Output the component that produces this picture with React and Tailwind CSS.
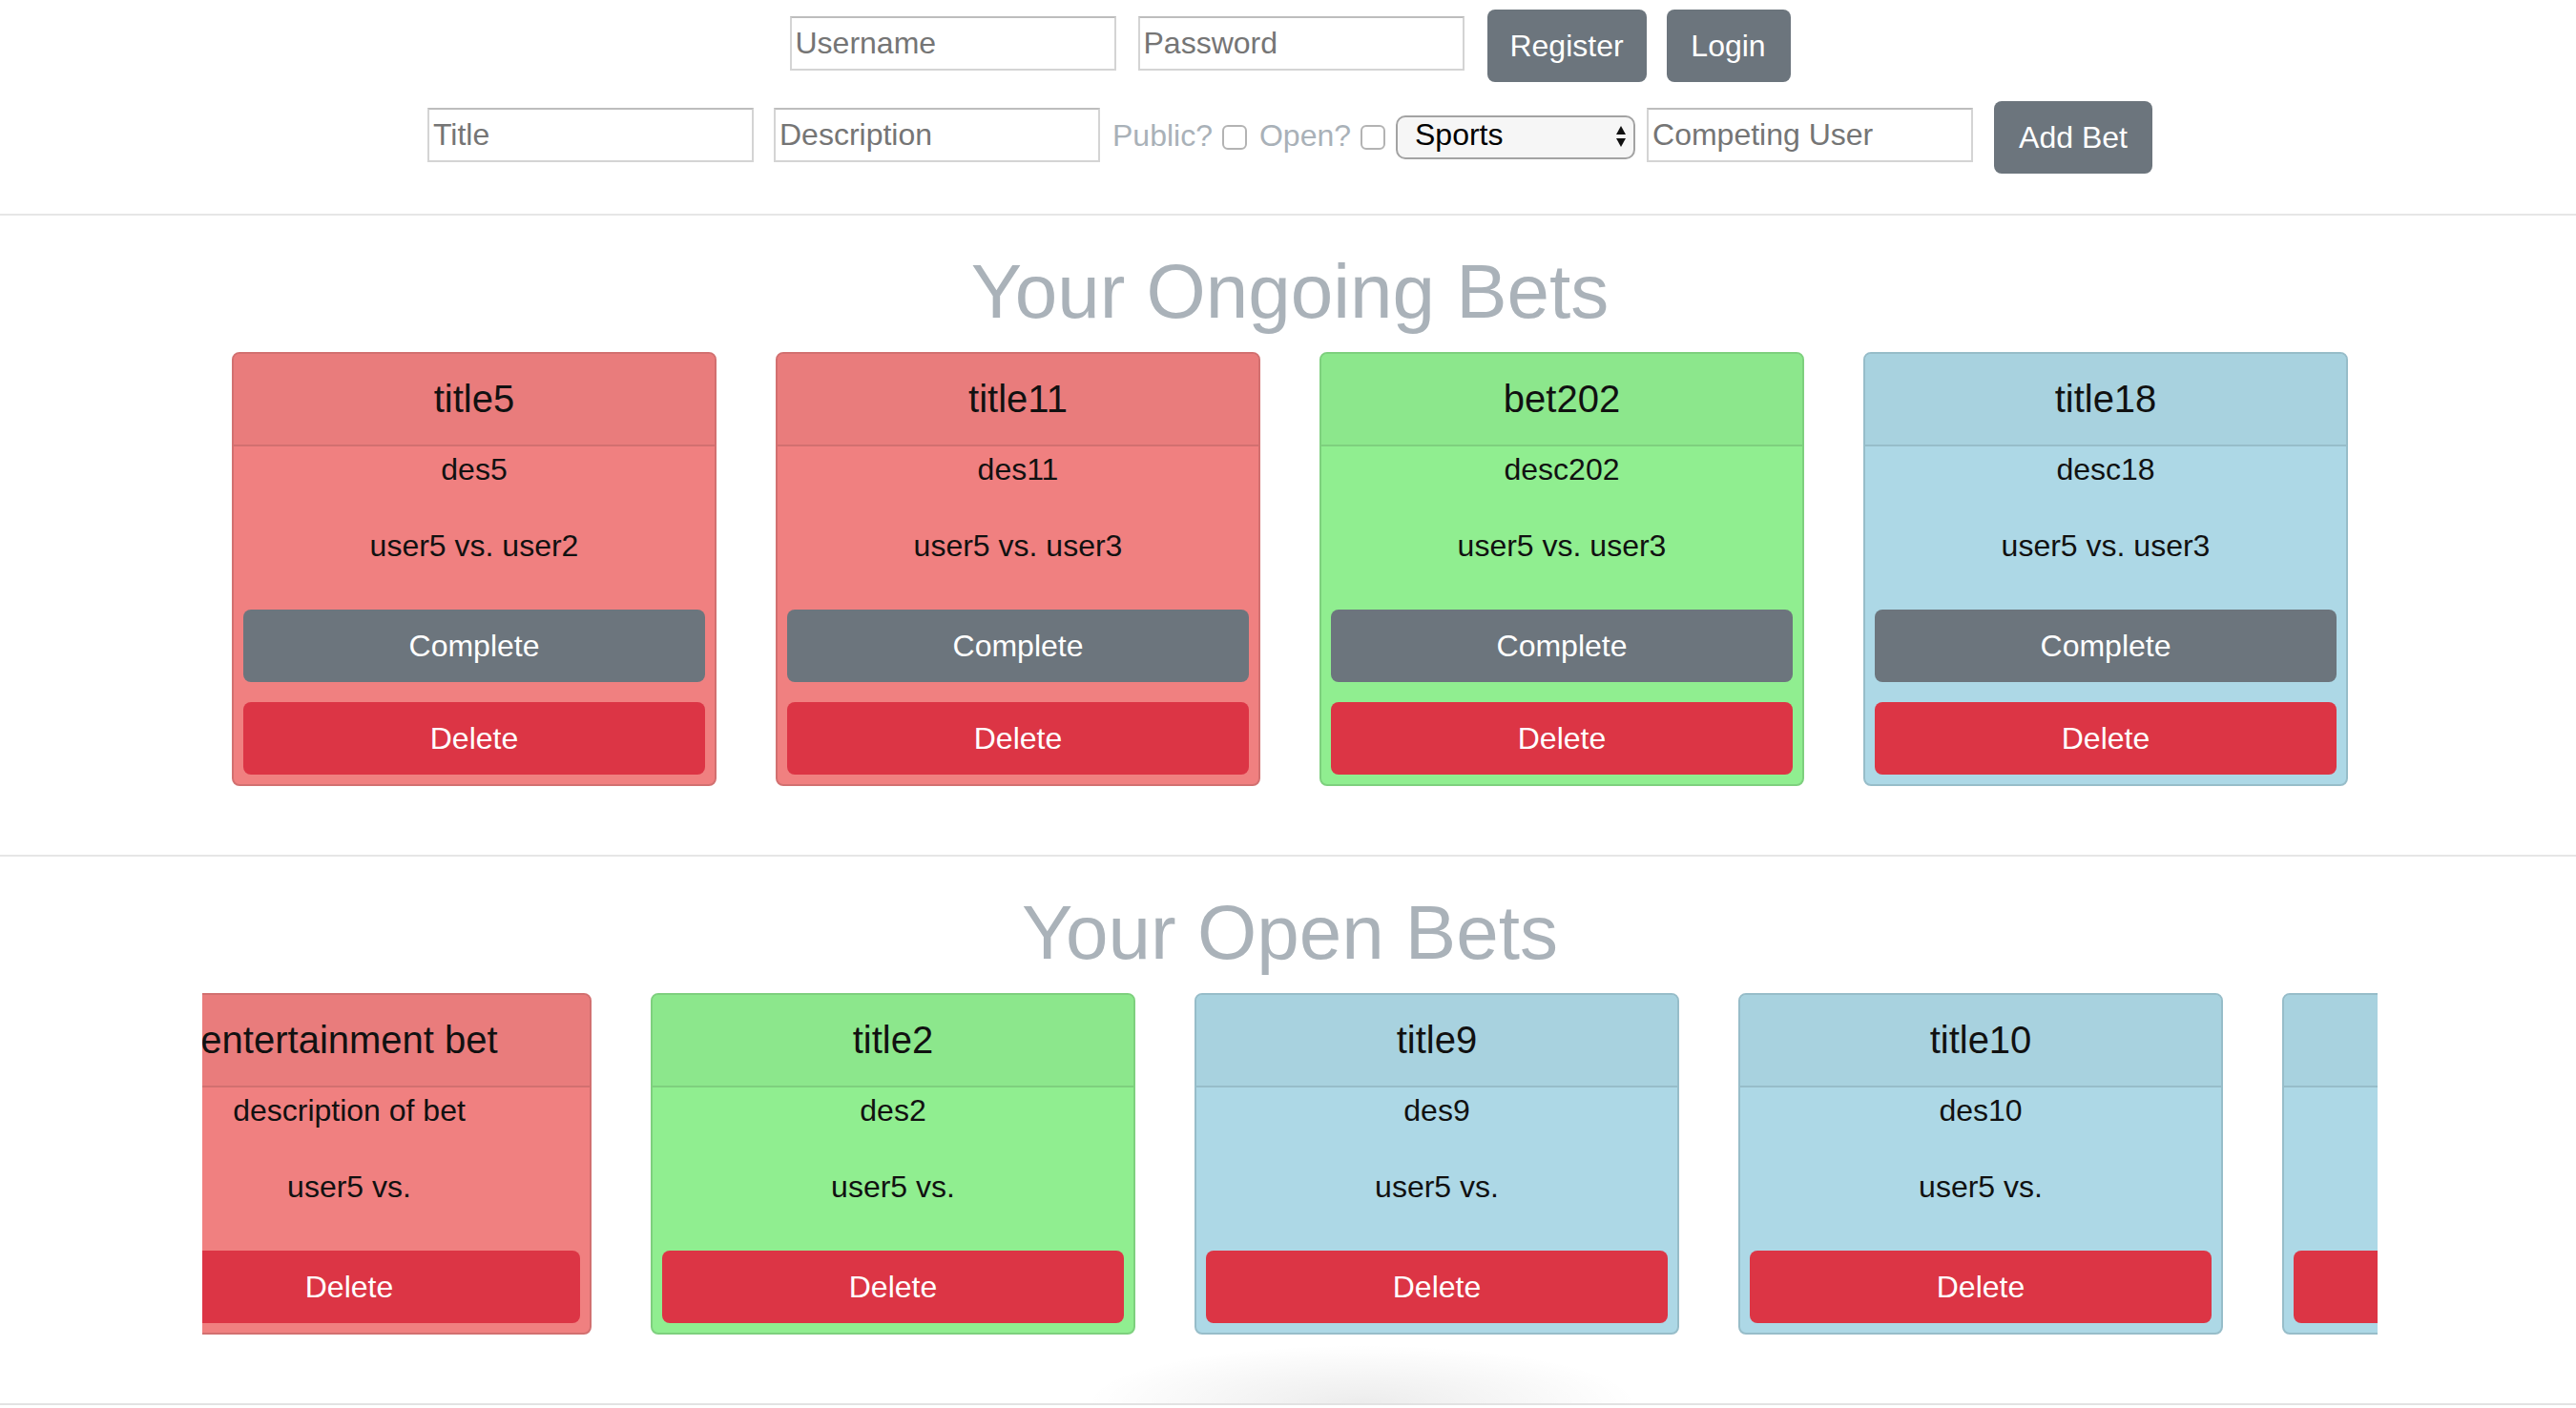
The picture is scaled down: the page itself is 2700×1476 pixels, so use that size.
import { useState } from 'react';

// card palettes — body is the css named colour, header/border are the bootstrap overlays on top of it
const PALETTE = {
  red: { body: 'bg-[#f08080]', head: 'bg-[#e97c7c] border-[#d27070]', edge: 'border-[#d27070]' },
  green: { body: 'bg-[#90ee90]', head: 'bg-[#8ce78c] border-[#7ed07e]', edge: 'border-[#7ed07e]' },
  blue: { body: 'bg-[#add8e6]', head: 'bg-[#a8d2df] border-[#97bdc9]', edge: 'border-[#97bdc9]' },
};

const ONGOING = [
  { id: 5, title: 'title5', desc: 'des5', users: 'user5 vs. user2', color: 'red' },
  { id: 11, title: 'title11', desc: 'des11', users: 'user5 vs. user3', color: 'red' },
  { id: 202, title: 'bet202', desc: 'desc202', users: 'user5 vs. user3', color: 'green' },
  { id: 18, title: 'title18', desc: 'desc18', users: 'user5 vs. user3', color: 'blue' },
];

const OPEN = [
  { id: 1, title: 'entertainment bet', desc: 'description of bet', users: 'user5 vs.', color: 'red' },
  { id: 2, title: 'title2', desc: 'des2', users: 'user5 vs.', color: 'green' },
  { id: 9, title: 'title9', desc: 'des9', users: 'user5 vs.', color: 'blue' },
  { id: 10, title: 'title10', desc: 'des10', users: 'user5 vs.', color: 'blue' },
  { id: 12, title: 'title12', desc: 'des12', users: 'user5 vs.', color: 'blue' },
];

function TextInput({ placeholder, className = '' }) {
  return (
    <input
      placeholder={placeholder}
      className={`w-[342px] h-[57px] bg-white border-2 border-[#d4d4d4] border-t-[#bdbdbd] px-[4px] text-[32px] text-black placeholder:text-[#757575] outline-none ${className}`}
    />
  );
}

function GrayButton({ children, className = '' }) {
  return (
    <button className={`h-[76px] rounded-[8px] bg-[#6c757d] text-white text-[32px] ${className}`}>
      {children}
    </button>
  );
}

function Check() {
  return (
    <input
      type="checkbox"
      className="appearance-none w-[26px] h-[26px] rounded-[6px] border-2 border-[#b3b3b3] bg-white checked:bg-[#0a84ff]"
    />
  );
}

function BetCard({ bet, ongoing }) {
  const p = PALETTE[bet.color];
  return (
    <div className={`w-[508px] shrink-0 mx-[31px] rounded-[8px] border-2 overflow-hidden text-center ${p.edge} ${p.body}`}>
      <div className={`pt-[23px] pb-[24px] border-b-2 ${p.head}`}>
        <h5 className="text-[40px] leading-[48px] text-[#111] whitespace-nowrap">{bet.title}</h5>
      </div>
      <div className="px-[10px] pb-[10px]">
        <p className="text-[32px] leading-[48px] text-[#111]">{bet.desc}</p>
        <p className="mt-[32px] text-[32px] leading-[48px] text-[#111]">{bet.users}</p>
        <div className="mt-[43px] flex flex-col gap-[21px]">
          {ongoing && (
            <button className="h-[76px] w-full rounded-[8px] bg-[#6c757d] text-white text-[32px]">Complete</button>
          )}
          <button className="h-[76px] w-full rounded-[8px] bg-[#dc3545] text-white text-[32px]">Delete</button>
        </div>
      </div>
    </div>
  );
}

function Divider() {
  return <div className="h-[2px] bg-[#e6e6e6]" />;
}

export default function App() {
  const [category, setCategory] = useState('Sports');

  return (
    <div className="min-h-screen bg-white text-[#212529] font-['Liberation_Sans',Arial,sans-serif]">
      {/* login + new bet form */}
      <div className="pl-[4px] pt-[10px] pb-[10px]">
        <div className="flex justify-center items-start h-[75px]">
          <TextInput placeholder="Username" className="mt-[7px]" />
          <TextInput placeholder="Password" className="mt-[7px] ml-[23px]" />
          <GrayButton className="w-[167px] ml-[24px] h-[75px]">Register</GrayButton>
          <GrayButton className="w-[130px] ml-[21px] h-[75px]">Login</GrayButton>
        </div>
        <div className="flex justify-center items-center h-[76px] mt-[21px]">
          <TextInput placeholder="Title" className="-mt-[6px]" />
          <TextInput placeholder="Description" className="-mt-[6px] ml-[21px]" />
          <span className="ml-[13px] -mt-[4px] text-[32px] text-[#a9b1b8]">Public?</span>
          <span className="ml-[10px] flex"><Check /></span>
          <span className="ml-[13px] -mt-[4px] text-[32px] text-[#a9b1b8]">Open?</span>
          <span className="ml-[10px] flex"><Check /></span>
          <div className="relative ml-[11px] w-[251px] h-[46px]">
            <select
              value={category}
              onChange={e => setCategory(e.target.value)}
              className="appearance-none w-full h-full rounded-[10px] border-2 border-[#a3a3a3] bg-[#f6f6f6] pl-[18px] pb-[6px] leading-[36px] text-[32px] text-black outline-none"
            >
              <option>Sports</option>
              <option>Entertainment</option>
              <option>Other</option>
            </select>
            <svg className="absolute right-[9px] top-[10px] pointer-events-none" width="12" height="24" viewBox="0 0 12 24">
              <path d="M6 1 L11 10 L1 10 Z" fill="#111" />
              <path d="M1 14 L11 14 L6 23 Z" fill="#111" />
            </svg>
          </div>
          <TextInput placeholder="Competing User" className="-mt-[6px] ml-[12px] w-[341px]" />
          <GrayButton className="w-[166px] ml-[22px]">Add Bet</GrayButton>
        </div>
      </div>

      <div className="mt-[32px]"><Divider /></div>

      {/* ongoing */}
      <div className="pl-[4px]">
        <h1 className="mt-[32px] mb-[15px] text-center text-[80px] leading-[96px] text-[#aab2b9]">Your Ongoing Bets</h1>
        <div className="w-[2280px] mx-auto flex">
          {ONGOING.map(b => <BetCard key={b.id} bet={b} ongoing />)}
        </div>
      </div>

      <div className="mt-[72px]"><Divider /></div>

      {/* open, scrolled sideways */}
      <div className="pl-[4px]">
        <h1 className="mt-[32px] mb-[15px] text-center text-[80px] leading-[96px] text-[#aab2b9]">Your Open Bets</h1>
        <div className="w-[2280px] mx-auto overflow-hidden">
          <div className="flex -ml-[131px]">
            {OPEN.map(b => <BetCard key={b.id} bet={b} />)}
          </div>
        </div>
      </div>

      <div className="h-[72px] flex items-end">
        <div className="ml-[1135px] w-[585px] h-[62px] bg-[radial-gradient(ellipse_at_bottom,rgba(0,0,0,0.075),rgba(0,0,0,0)_70%)]" />
      </div>
      <div className="h-[2px] bg-[#e2e2e2]" />
    </div>
  );
}
